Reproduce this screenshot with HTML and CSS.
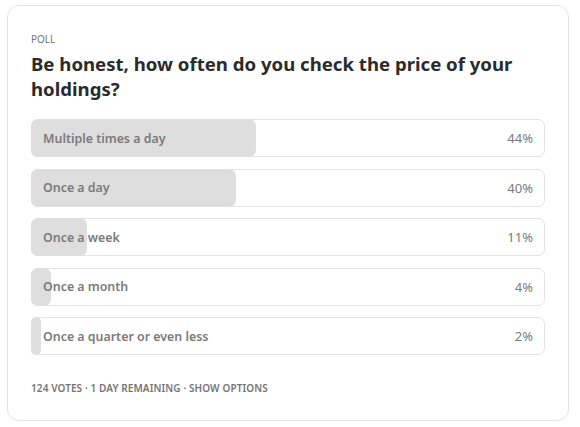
FILE: index.html
```html
<!DOCTYPE html>
<html lang="en">
<head>
    <meta charset="UTF-8">
    <title>Poll</title>
    <link rel="stylesheet" href="styles.css">
</head>
<body>
    <div class="poll">
        <div class="poll-label">Poll</div>
        <h2 class="poll-title">Be honest, how often do you check the price of your holdings?</h2>

        <div class="options">
            <div class="option">
                <div class="fill" style="width: 44%"></div>
                <span class="name">Multiple times a day</span>
                <span class="pct">44%</span>
            </div>
            <div class="option">
                <div class="fill" style="width: 40%"></div>
                <span class="name">Once a day</span>
                <span class="pct">40%</span>
            </div>
            <div class="option">
                <div class="fill" style="width: 11%"></div>
                <span class="name">Once a week</span>
                <span class="pct">11%</span>
            </div>
            <div class="option">
                <div class="fill" style="width: 4%"></div>
                <span class="name">Once a month</span>
                <span class="pct">4%</span>
            </div>
            <div class="option">
                <div class="fill" style="width: 2%"></div>
                <span class="name">Once a quarter or even less</span>
                <span class="pct">2%</span>
            </div>
        </div>

        <div class="poll-meta">124 votes · 1 day remaining · Show options</div>
    </div>
</body>
</html>
```

FILE: styles.css
```css
body {
    margin: 0;
    padding: 5px 11px 6px 7px;
    font-family: "Noto Sans", "Open Sans", sans-serif;
    background: #fff;
}
.poll {
    border: 1px solid #e3e3e3;
    border-radius: 12px;
    padding: 26px 23px 0 23px;
    box-sizing: border-box;
    height: 416px;
}
.poll-label {
    font-size: 10px;
    color: #757575;
    text-transform: uppercase;
    line-height: 14px;
}
.poll-title {
    margin: 5px 0 18px;
    font-size: 18.6px;
    font-weight: 700;
    line-height: 25px;
    color: #2b2b2b;
}
.options {
    display: flex;
    flex-direction: column;
    gap: 11.5px;
}
.option {
    position: relative;
    display: flex;
    justify-content: space-between;
    align-items: center;
    height: 38px;
    padding: 0 11px;
    border: 1px solid #e3e3e3;
    border-radius: 7px;
    box-sizing: border-box;
    font-size: 12.4px;
    color: #7a7a7a;
}
.fill {
    position: absolute;
    left: -1px;
    top: -1px;
    bottom: -1px;
    min-width: 10px;
    background: #dedede;
    border-radius: 7px;
}
.name, .pct {
    position: relative;
}
.name {
    font-weight: 600;
}
.pct {
    font-size: 13px;
}
.poll-meta {
    margin-top: 26px;
    font-size: 10px;
    font-weight: 600;
    color: #757575;
    text-transform: uppercase;
    letter-spacing: 0.1px;
}
```
